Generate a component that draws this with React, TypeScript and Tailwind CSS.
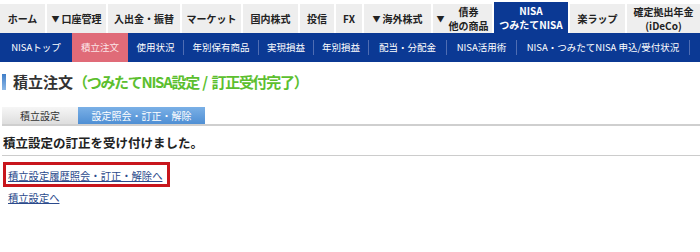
import React from 'react';

const topTabs: { label: React.ReactNode; w: string; active?: boolean }[] = [
  { label: 'ホーム', w: 'w-[45px]' },
  { label: <><span className="text-[8px] mr-[2px]">▼</span>口座管理</>, w: 'w-[59px]' },
  { label: '入出金・振替', w: 'w-[72px]' },
  { label: 'マーケット', w: 'w-[59px]' },
  { label: '国内株式', w: 'w-[55px]' },
  { label: '投信', w: 'w-[34px]' },
  { label: 'FX', w: 'w-[26px]' },
  { label: <><span className="text-[8px] mr-[2px]">▼</span>海外株式</>, w: 'w-[67px]' },
  {
    label: (
      <span className="flex items-center">
        <span className="text-[8px] mr-[4px]">▼</span>
        <span className="flex flex-col items-center leading-[14px]">
          <span>債券</span>
          <span>他の商品</span>
        </span>
      </span>
    ),
    w: 'w-[59px]',
  },
  {
    label: (
      <span className="flex flex-col items-center leading-[14px]">
        <span>NISA</span>
        <span>つみたてNISA</span>
      </span>
    ),
    w: 'w-[74px]',
    active: true,
  },
  { label: '楽ラップ', w: 'w-[55px]' },
  {
    label: (
      <span className="flex flex-col items-center leading-[14px]">
        <span>確定拠出年金</span>
        <span>(iDeCo)</span>
      </span>
    ),
    w: 'flex-1',
  },
];

const subItems: { label: string; w: string }[] = [
  { label: '使用状況', w: 'w-[55px]' },
  { label: '年別保有商品', w: 'w-[74px]' },
  { label: '実現損益', w: 'w-[54px]' },
  { label: '年別損益', w: 'w-[54px]' },
  { label: '配当・分配金', w: 'w-[77px]' },
  { label: 'NISA活用術', w: 'w-[69px]' },
  { label: 'NISA・つみたてNISA 申込/受付状況', w: 'w-[172px]' },
];

const App: React.FC = () => {
  return (
    <div
      className="w-[700px] h-[252px] bg-white overflow-hidden text-[#222]"
      style={{ fontFamily: '"Noto Sans CJK JP", "Noto Sans", sans-serif' }}
    >
      {/* Global nav */}
      <div className="flex items-end gap-[2px] h-[33px]">
        {topTabs.map((t, i) => (
          <div
            key={i}
            className={`${t.w} flex items-center justify-center text-[10px] leading-[14px] font-bold whitespace-nowrap ${
              t.active ? 'h-[31px] bg-[#0b3994] text-white' : 'h-[29px] bg-[#eeeeee] text-[#222]'
            }`}
          >
            {t.label}
          </div>
        ))}
      </div>

      {/* NISA sub nav */}
      <div className="flex items-center h-[29px] bg-[#0b3994] text-white text-[9.5px] whitespace-nowrap">
        <div className="w-[72px] h-full flex items-center justify-center">NISAトップ</div>
        <div className="w-[56px] h-full flex items-center justify-center bg-[#e06b78] text-[#fbe4e7]">積立注文</div>
        {subItems.map((s) => (
          <React.Fragment key={s.label}>
            <div className={`${s.w} h-full flex items-center justify-center`}>{s.label}</div>
            <div className="w-px h-[15px] bg-[#4f6db3]" />
          </React.Fragment>
        ))}
      </div>

      {/* Title */}
      <div className="mt-[10px] flex items-center h-[20px] pl-[2px]">
        <div className="w-[4px] h-[16px] bg-gradient-to-b from-[#3f7ec8] to-[#8cb8e6]" />
        <h1 className="ml-[7px] text-[15px] leading-[20px] font-bold text-[#333] whitespace-pre">
          積立注文
          <span className="text-[#5cbf2f]">
            <span className="tracking-[-1.3px]">（つみたてNISA設定</span>
            {' / '}
            <span className="tracking-[-1.3px]">訂正受付完了）</span>
          </span>
        </h1>
      </div>

      {/* Tabs */}
      <div className="mt-[15px] ml-[2px] flex border-b-2 border-[#cfcfcf]">
        <div className="w-[76px] h-[17px] flex items-center justify-center text-[10px] text-[#333] bg-gradient-to-b from-[#f6f6f6] to-[#dedede]">
          積立設定
        </div>
        <div className="w-[127px] h-[17px] flex items-center justify-center text-[10px] text-white bg-gradient-to-b from-[#7ab0e6] to-[#4f8fd4]">
          設定照会・訂正・解除
        </div>
      </div>

      {/* Message */}
      <div className="mt-[9px] ml-[2px] pl-[1px] pb-[4px] border-b border-[#cccccc]">
        <p className="text-[12.5px] leading-[16px] font-bold text-[#222]">積立設定の訂正を受け付けました。</p>
      </div>

      {/* Links */}
      <div className="mt-[6px] ml-[3px] w-[167px] h-[25px] border-[3px] border-[#c8161d] pl-[2px] pt-[4px]">
        <a href="#" className="text-[10.3px] leading-[14px] text-[#2b4a8c] underline block">
          積立設定履歴照会・訂正・解除へ
        </a>
      </div>
      <div className="mt-[1px] ml-[8px] leading-[14px]">
        <a href="#" className="text-[10.3px] leading-[14px] text-[#2b4a8c] underline">
          積立設定へ
        </a>
      </div>
    </div>
  );
};

export default App;
